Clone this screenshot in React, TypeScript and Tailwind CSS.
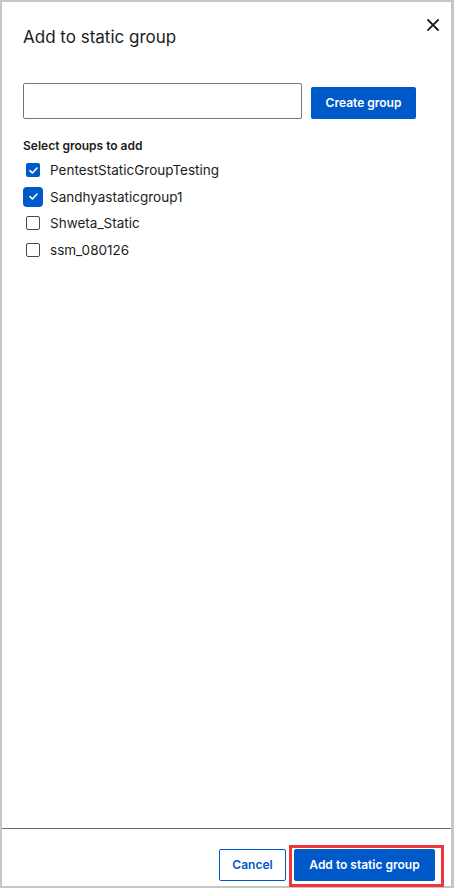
import { useState } from "react";

const groups = [
  { name: "PentestStaticGroupTesting", checked: true },
  { name: "Sandhyastaticgroup1", checked: true, focused: true },
  { name: "Shweta_Static", checked: false },
  { name: "ssm_080126", checked: false },
];

function Check({ checked, focused }: { checked: boolean; focused?: boolean }) {
  const size = focused ? "w-[20px] h-[20px] rounded-[4px]" : "w-[14px] h-[14px] rounded-[2px]";
  return (
    <div className="w-[20px] h-[20px] flex items-center justify-center">
      <div
        className={
          checked
            ? `${size} bg-[#0059c9] flex items-center justify-center`
            : `${size} border border-[#4a4a4a] bg-white`
        }
      >
        {checked && (
          <svg width="9" height="7" viewBox="0 0 9 7" fill="none">
            <path d="M1 3.6L3.4 6L8 1" stroke="white" strokeWidth="1.6" strokeLinecap="round" strokeLinejoin="round" />
          </svg>
        )}
      </div>
    </div>
  );
}

export default function App() {
  const [name, setName] = useState("");

  return (
    <div
      className="w-[454px] h-[888px] bg-white border-t-2 border-l-2 border-r-[3px] border-b-2 border-[#c6c6c6] flex flex-col text-[#1c1c1c]"
      style={{ fontFamily: "Inter, 'Noto Sans', sans-serif" }}
    >
      <div className="flex-1 relative px-[21px]">
        <button className="absolute right-[10px] top-[15px] w-[16px] h-[16px] flex items-center justify-center">
          <svg width="12" height="12" viewBox="0 0 12 12">
            <path d="M1 1L11 11M11 1L1 11" stroke="#1a1a1a" strokeWidth="1.8" strokeLinecap="square" />
          </svg>
        </button>

        <h1 className="mt-[23px] text-[17px] leading-[24px] font-normal">Add to static group</h1>

        <div className="mt-[34px] flex items-end gap-[9px]">
          <input
            value={name}
            onChange={(e) => setName(e.target.value)}
            className="w-[279px] h-[36px] border border-[#757575] rounded-[2px] px-2 text-[13px] outline-none"
          />
          <button className="w-[105px] h-[32px] bg-[#0059c9] text-white text-[12px] font-semibold rounded-[2px]">
            Create group
          </button>
        </div>

        <div className="mt-[19px] text-[12px] leading-[16px] font-semibold">Select groups to add</div>

        <div className="mt-[3px] flex flex-col">
          {groups.map((g) => (
            <div key={g.name} className="h-[26.5px] flex items-center gap-[7px]">
              <Check checked={g.checked} focused={g.focused} />
              <span className="text-[13.5px] leading-[18px]">{g.name}</span>
            </div>
          ))}
        </div>
      </div>

      <div className="h-[58px] border-t border-[#6f6f6f] flex justify-end items-start pt-[20px] pr-[16px] gap-[8px]">
        <button className="w-[67px] h-[32px] border border-[#0059c9] text-[#0059c9] text-[12px] font-semibold rounded-[2px]">
          Cancel
        </button>
        <div className="relative">
          <button className="w-[141px] h-[32px] bg-[#0059c9] text-white text-[12px] font-semibold rounded-[2px]">
            Add to static group
          </button>
          <div className="absolute -left-[5px] -right-[9px] -top-[4px] -bottom-[6px] border-[3px] border-[#f0363c] pointer-events-none" />
        </div>
      </div>
    </div>
  );
}
